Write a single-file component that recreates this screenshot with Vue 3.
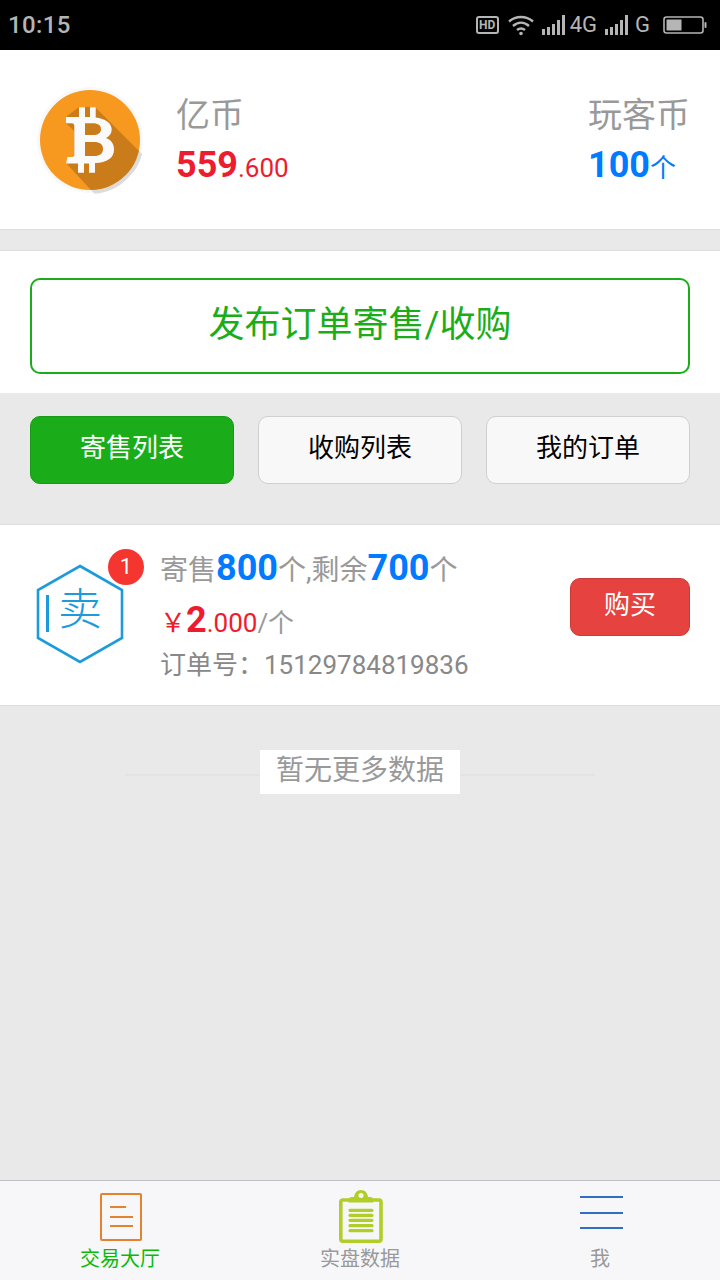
<script setup>
const tabs = [
  { label: "寄售列表", active: true },
  { label: "收购列表", active: false },
  { label: "我的订单", active: false },
];
</script>

<template>
  <div class="page">
    <div class="status-bar">
      <span class="clock">10:15</span>
      <div class="status-icons">
        <span class="hd">HD</span>
        <svg class="wifi" width="26" height="22" viewBox="0 0 26 22" fill="none" stroke="#b5b5b5" stroke-width="2.4">
          <path d="M1 7.5 C8 1.5 18 1.5 25 7.5" />
          <path d="M5 12 C10 7.6 16 7.6 21 12" />
          <path d="M9 16 C11.5 14 14.500 14 17 16" />
          <circle cx="13" cy="19.500" r="1.800" fill="#b5b5b5" stroke="none" />
        </svg>
        <svg class="signal" width="24" height="20" viewBox="0 0 24 20" fill="#b5b5b5">
          <rect x="0" y="14" width="3" height="6" />
          <rect x="5" y="12" width="3" height="8" />
          <rect x="10" y="9" width="3" height="11" />
          <rect x="15" y="5" width="3" height="15" />
          <rect x="20" y="0" width="3" height="20" />
        </svg>
        <span class="net first">4G</span>
        <svg class="signal" width="24" height="20" viewBox="0 0 24 20" fill="#b5b5b5">
          <rect x="0" y="14" width="3" height="6" />
          <rect x="5" y="12" width="3" height="8" />
          <rect x="10" y="9" width="3" height="11" />
          <rect x="15" y="5" width="3" height="15" />
          <rect x="20" y="0" width="3" height="20" />
        </svg>
        <span class="net">G</span>
        <svg class="battery" width="44" height="18" viewBox="0 0 44 18">
          <rect x="1" y="1" width="39" height="16" rx="2.500" fill="none" stroke="#b5b5b5" stroke-width="1.600" />
          <rect x="3.500" y="3.500" width="15" height="11" fill="#b5b5b5" />
          <rect x="41.500" y="6" width="2" height="6" rx="1" fill="#b5b5b5" />
        </svg>
      </div>
    </div>

    <section class="wallet">
      <svg class="coin" width="110" height="110" viewBox="0 0 110 110">
        <defs>
          <clipPath id="coin-ring">
            <circle cx="55" cy="55" r="54" />
          </clipPath>
          <clipPath id="coin-face">
            <circle cx="55" cy="55" r="50" />
          </clipPath>
        </defs>
        <circle cx="55" cy="55" r="53" fill="#f8f8f8" />
        <path d="M60 22 L112 74 L68 118 L31 78 L39 70 V46 L31 38 V32 L44 22 Z" fill="#dcdcdc" clip-path="url(#coin-ring)" />
        <circle cx="55" cy="55" r="50" fill="#f7981f" />
        <path d="M60 22 L112 74 L68 118 L31 78 L39 70 V46 L31 38 V32 L44 22 Z" fill="#cb7c1a" clip-path="url(#coin-face)" />
        <path
          fill="#fafafa"
          fill-rule="evenodd"
          d="M31 32 H44 V22.3 H50 V32 H55 V22.3 H60.7 V32.500 C70 33.500 76.700 38 76.700 44.500 C76.700 48.500 74.500 51 71 53 C76 54.500 79 59 79 64.500 C79 73 72 77.500 60 78 V87.700 H54 V78.500 H49 V87.700 H43 V78.500 H31 L32.500 72 H36.500 C38.500 72 39.300 71 39.300 69.500 V41 C39.300 39 38.500 38.300 36.500 38.300 H31 Z M50 38.300 V50 H58 C63 50 66 48 66 44 C66 40.500 63 38.300 58 38.300 Z M50 57 V71 H59 C65 71 68 68.500 68 64 C68 59.500 65 57 59 57 Z"
        />
      </svg>
      <div class="balance">
        <div class="balance-label">亿币</div>
        <div class="balance-value red"><b>559</b>.600</div>
      </div>
      <div class="balance right">
        <div class="balance-label">玩客币</div>
        <div class="balance-value blue"><b>100</b>个</div>
      </div>
    </section>

    <section class="publish">
      <button class="publish-btn">发布订单寄售/收购</button>
    </section>

    <nav class="tabs">
      <button v-for="tab in tabs" :key="tab.label" class="tab" :class="{ active: tab.active }">{{ tab.label }}</button>
    </nav>

    <section class="order">
      <div class="sell-icon">
        <svg width="90" height="100" viewBox="0 0 90 100" fill="none">
          <polygon points="45,2 87,26 87,74 45,98 3,74 3,26" stroke="#1b9bdb" stroke-width="2.600" />
          <rect x="11" y="31" width="3" height="37" fill="#1b9bdb" />
          <text x="45" y="61" text-anchor="middle" class="sell-char">卖</text>
        </svg>
        <span class="badge">1</span>
      </div>
      <div class="order-info">
        <div class="line-qty">寄售<b>800</b>个,剩余<b>700</b>个</div>
        <div class="line-price"><span class="price">￥<b>2</b>.000</span><span class="unit">/个</span></div>
        <div class="line-no">订单号：15129784819836</div>
      </div>
      <button class="buy">购买</button>
    </section>

    <div class="no-more">
      <span>暂无更多数据</span>
    </div>

    <footer class="tabbar">
      <div class="bar-item on">
        <svg width="46" height="53" viewBox="0 0 46 53" fill="none" stroke="#e38330" stroke-width="2">
          <rect x="4" y="4" width="40" height="46" rx="1" />
          <path d="M13 17 H29 M13 27 H36 M13 36 H36" />
        </svg>
        <span>交易大厅</span>
      </div>
      <div class="bar-item">
        <svg width="46" height="53" viewBox="0 0 46 53" fill="none">
          <path d="M12 10 H6 Q3.800 10 3.800 12 V49 Q3.800 51.200 6 51.200 H42 Q44 51.200 44 49 V12 Q44 10 42 10 H36" stroke="#b1cd27" stroke-width="3.600" />
          <path d="M11.500 12.500 V10 Q11.500 7 15 7 H17 Q18 0 24 0 Q30 0 31 7 H33 Q36.300 7 36.300 10 V12.500 Z" fill="#b1cd27" />
          <circle cx="24" cy="5.500" r="2.500" fill="#f7f7fa" />
          <path d="M13 20.300 H35 M13 25.300 H35 M13 30.300 H35 M13 35.700 H35 M13 40.700 H35" stroke="#b1cd27" stroke-width="3.200" stroke-linecap="round" />
        </svg>
        <span>实盘数据</span>
      </div>
      <div class="bar-item">
        <svg width="46" height="53" viewBox="0 0 46 53" fill="none" stroke="#2f6fc4" stroke-width="2">
          <path d="M3 7 H46 M3 23 H46 M3 38 H46" />
        </svg>
        <span>我</span>
      </div>
    </footer>
  </div>
</template>

<style scoped>
.page {
  width: 720px;
  height: 1280px;
  display: flex;
  flex-direction: column;
  overflow: hidden;
  background: #e9e9e9;
  font-family: Roboto, "Noto Sans CJK SC", sans-serif;
}

.status-bar {
  height: 50px;
  flex: none;
  background: #000;
  display: flex;
  align-items: center;
  justify-content: space-between;
  padding: 0 13px 0 8px;
  color: #b5b5b5;
}
.clock {
  font-size: 24px;
  font-weight: 500;
  letter-spacing: 0.4px;
}
.status-icons {
  display: flex;
  align-items: center;
}
.hd {
  width: 23px;
  height: 18px;
  box-sizing: border-box;
  border: 2px solid #b5b5b5;
  border-radius: 3px;
  font-size: 12px;
  font-weight: 700;
  line-height: 14px;
  text-align: center;
}
.wifi {
  margin-left: 9px;
}
.signal {
  margin-left: 8px;
}
.net {
  font-size: 22px;
  margin-left: 6px;
  line-height: 20px;
}
.net.first {
  margin-left: 4px;
}
.battery {
  margin-left: 13px;
}

.wallet {
  height: 179px;
  flex: none;
  background: #fff;
  border-bottom: 1px solid #dedede;
  display: flex;
  align-items: center;
  padding: 0 30px 0 35px;
}
.coin {
  flex: none;
}
.balance {
  margin-left: 31px;
  padding-top: 5px;
}
.balance.right {
  margin-left: auto;
}
.balance-label {
  font-size: 34px;
  line-height: 48px;
  margin-top: -2px;
  color: #999;
}
.balance-value {
  font-size: 26px;
  line-height: 48px;
  margin-top: 2px;
}
.balance-value b {
  font-size: 36px;
  font-weight: 700;
}
.red {
  color: #ed1c2e;
}
.blue {
  color: #007aff;
}

.publish {
  margin-top: 20px;
  height: 143px;
  flex: none;
  box-sizing: border-box;
  background: #fff;
  border-top: 1px solid #dedede;
  padding: 27px 30px 0;
}
.publish-btn {
  display: block;
  width: 660px;
  height: 96px;
  border: 2px solid #1aad19;
  border-radius: 10px;
  background: #fff;
  color: #1aad19;
  font-family: inherit;
  font-size: 36px;
  padding: 0 0 10px;
}

.tabs {
  display: flex;
  justify-content: space-between;
  padding: 23px 30px 0;
  flex: none;
}
.tab {
  width: 204px;
  height: 68px;
  box-sizing: border-box;
  border: 1px solid #cfcfcf;
  border-radius: 10px;
  background: #f8f8f8;
  color: #000;
  font-family: inherit;
  font-size: 26px;
  padding: 0 0 10px;
}
.tab.active {
  background: #1aad19;
  border-color: #179b16;
  color: #fff;
}

.order {
  margin-top: 40px;
  height: 182px;
  flex: none;
  box-sizing: border-box;
  background: #fff;
  border-top: 1px solid #dedede;
  border-bottom: 1px solid #dedede;
  display: flex;
  align-items: center;
  padding: 0 30px 0 35px;
}
.sell-icon {
  position: relative;
  flex: none;
  width: 90px;
  height: 100px;
  margin-top: -2px;
}
.sell-char {
  font-family: "Noto Sans CJK SC", sans-serif;
  font-size: 44px;
  font-weight: 300;
  fill: #1b9bdb;
}
.badge {
  position: absolute;
  top: -15px;
  left: 73px;
  width: 36px;
  height: 36px;
  border-radius: 18px;
  background: #f43530;
  color: #fff;
  font-size: 22px;
  line-height: 36px;
  text-align: center;
}
.order-info {
  flex: 1;
  margin-left: 35px;
  color: #999;
}
.line-qty {
  font-size: 28px;
  line-height: 44px;
  white-space: nowrap;
}
.line-qty b {
  font-size: 36px;
  font-weight: 700;
  color: #007aff;
}
.line-price {
  font-size: 26px;
  line-height: 44px;
  margin-top: 5px;
  white-space: nowrap;
}
.price {
  color: #ed1c2e;
}
.price b {
  font-size: 36px;
}
.line-no {
  font-size: 26px;
  line-height: 40px;
  color: #888;
  white-space: nowrap;
}
.buy {
  flex: none;
  width: 120px;
  height: 58px;
  margin-bottom: 16px;
  box-sizing: border-box;
  border: 1px solid #c93a38;
  border-radius: 10px;
  background: #e64340;
  color: #fff;
  font-family: inherit;
  font-size: 26px;
  padding: 0 0 10px;
}

.no-more {
  margin: 44px auto 0;
  width: 470px;
  height: 44px;
  flex: none;
  display: flex;
  justify-content: center;
  background: linear-gradient(#e3e3e3, #e3e3e3) 0 24px / 100% 2px no-repeat;
}
.no-more span {
  width: 200px;
  background: #fff;
  color: #999;
  font-size: 28px;
  line-height: 42px;
  text-align: center;
}

.tabbar {
  margin-top: auto;
  height: 100px;
  flex: none;
  box-sizing: border-box;
  background: #f7f7fa;
  border-top: 1px solid #c0bfc4;
  display: grid;
  grid-template-columns: repeat(3, 1fr);
}
.bar-item {
  display: flex;
  flex-direction: column;
  align-items: center;
  padding-top: 9px;
  color: #999;
  font-size: 20px;
}
.bar-item svg {
  flex: none;
}
.bar-item span {
  line-height: 28px;
  margin-top: 2px;
}
.bar-item.on {
  color: #09bb07;
}
</style>
